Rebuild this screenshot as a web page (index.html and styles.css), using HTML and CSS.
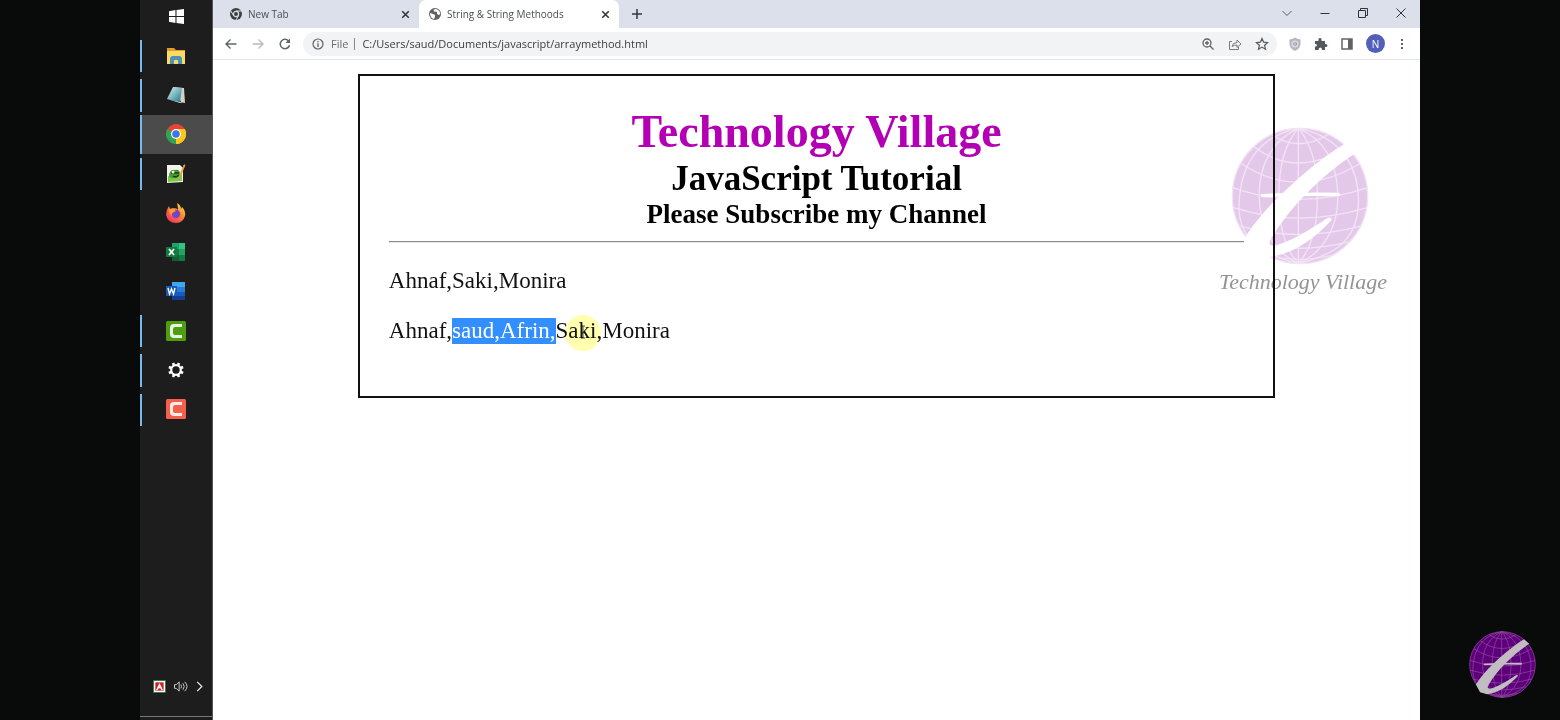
FILE: index.html
```html
<!DOCTYPE html>
<html lang="en">
<head>
<meta charset="utf-8">
<title>String &amp; String Methoods</title>
<link rel="stylesheet" href="styles.css">
</head>
<body>
<svg class="defs" aria-hidden="true">
  <defs>
    <symbol id="globe" viewBox="92 49 412 412">
      <circle class="globe-ball" cx="298" cy="255" r="203"/>
      <g class="globe-grid">
        <circle cx="298" cy="255" r="202"/>
        <path d="M293 53V457M293 53C210 90 175 170 176 255S215 420 293 457M293 53C250 100 235 180 235 255S250 410 293 457M293 53C335 100 350 180 350 255S335 410 293 457M293 53C380 90 410 170 411 255S375 420 293 457M293 53C160 80 118 180 116 285S190 430 293 457M293 53C430 80 478 180 472 285S400 430 293 457"/>
        <path d="M215 73Q293 125 380 73M160 108Q293 205 435 108M122 158Q293 270 477 158M98 230Q293 300 500 230M100 290Q293 352 498 290M120 345Q293 395 478 345M153 392Q293 430 443 392M205 433Q293 455 390 433"/>
      </g>
      <path class="globe-mark" d="M430 100C350 150 290 205 240 252C205 285 165 330 134 378L160 425L203 438C270 431 338 387 393 326Q391 315 380 321C320 362 265 393 222 404C203 405 205 393 213 380C240 335 280 283 320 245C365 200 415 158 462 128Z"/>
      <path class="globe-mark" d="M184 249Q300 243 414 245Q422 251 414 256Q300 253 186 259Q177 254 184 249Z"/>
    </symbol>
    <symbol id="close" viewBox="0 0 12 12"><path d="M3 3l6 6M9 3l-6 6" fill="none" stroke="currentColor" stroke-width="1.4"/></symbol>
    <symbol id="camtasia" viewBox="0 0 20 20"><rect width="20" height="20" rx="1.5" fill="currentColor"/><path d="M16 3H8Q4 3 4 7v6q0 4 4 4h8v-3H9q-2 0-2-2V8q0-2 2-2h7z" fill="#fff" opacity=".88"/></symbol>
  </defs>
</svg>
<div class="screen">
  <nav class="taskbar" aria-label="Taskbar">
    <button class="start" aria-label="Start"><svg class="win" viewBox="0 0 14 14"><path d="M0 2l6-1v5.600H0zM7 1l7-1v6.600H7zM0 7.500h6V13l-6-1zM7 7.500h7V14l-7-1z" fill="#fff"/></svg></button>
    <div class="apps">
      <button class="app open" aria-label="File Explorer"><svg viewBox="0 0 20 20"><path d="M1 2h7l2 2h9v3H1z" fill="#dba02c"/><path d="M1 5h18v13H1z" fill="#ffd964"/><path d="M4 18v-5q0-3 3-3h6q3 0 3 3v5h-4v-4H8v4z" fill="#4a94b8"/></svg></button>
      <button class="app open" aria-label="Notepad"><svg viewBox="0 0 20 20"><defs><linearGradient id="np" x2="1" y2="1"><stop stop-color="#e4f3f3"/><stop offset=".5" stop-color="#78b9c4"/><stop offset="1" stop-color="#277683"/></linearGradient></defs><path d="M7 2l11 1 1 15-4-1z" fill="#d8d2c5"/><path d="M7 2l9 1-2 14-13-3z" fill="url(#np)"/><path d="M1 14l13 3 4 1-4 0z" fill="#c4d8d8"/></svg></button>
      <button class="app open active" aria-label="Google Chrome"><svg viewBox="0 0 20 20"><path d="M10 10L1.500 5A10 10 0 0 1 18.700 5z" fill="#e94336"/><path d="M10 10l8.700-5A10 10 0 0 1 10 20z" fill="#fbc619"/><path d="M10 10v10A10 10 0 0 1 1.300 5z" fill="#33a552"/><path d="M14 12.500L10 20a10 10 0 0 0 8.700-15H10z" fill="#fbc619"/><circle cx="10" cy="10" r="5" fill="#fff"/><circle cx="10" cy="10" r="3.800" fill="#3b78e7"/></svg></button>
      <button class="app open" aria-label="Notepad++"><svg viewBox="0 0 20 20"><path d="M1 1h13l3 3v14L1 19z" fill="#f3f5ec"/><path d="M2 12l14-2v7L2 18z" fill="#79c84b"/><path d="M3 11q1-6 6-5 5-1 5 4-2 5-6 4-4 1-5-3z" fill="#4d9b37"/><path d="M5 9h8M7 12q3 2 6-1" fill="none" stroke="#173d1a" stroke-width="1.500"/><circle cx="7" cy="8" r="1.500" fill="#e7f1d8"/><path d="M19 1l-5 12-1 2 1-4 4-10z" fill="#e5a13a" stroke="#e5a13a"/></svg></button>
      <button class="app" aria-label="Firefox"><svg viewBox="0 0 20 20"><defs><linearGradient id="ff" x1="1" x2=".2" y2="1"><stop stop-color="#fff04d"/><stop offset=".45" stop-color="#ff8c2e"/><stop offset="1" stop-color="#f52d68"/></linearGradient></defs><path d="M11 0q4 2 4 6l1-2q4 4 3 9-2 7-9 7-8 0-10-8 0-5 3-9l1 3 3-1q4 0 5 2 0-3-1-7z" fill="url(#ff)"/><circle cx="10" cy="11" r="4.200" fill="#7842c9"/><path d="M3 6q4-1 7 2l-2 1q-3 1-2 4-3-2-3-7z" fill="#ff9d31"/></svg></button>
      <button class="app" aria-label="Excel"><svg viewBox="0 0 20 20"><path d="M6 1h13v18H6z" fill="#21a366"/><path d="M13 1h6v6h-6z" fill="#33c481"/><path d="M6 7h7v6H6zM6 13h13v6H6z" fill="#107c41"/><path d="M6 13h7v6H6z" fill="#185c37"/><path d="M0 5h11v10H0z" fill="#107c41"/><path d="M3 7l5 6M8 7l-5 6" stroke="#fff" stroke-width="1.700"/></svg></button>
      <button class="app" aria-label="Word"><svg viewBox="0 0 20 20"><path d="M6 1h13v5H6z" fill="#41a5ee"/><path d="M6 6h13v5H6z" fill="#2b7cd3"/><path d="M6 11h13v4H6z" fill="#185abd"/><path d="M6 15h13v4H6z" fill="#103f91"/><path d="M0 5h11v10H0z" fill="#185abd"/><path d="M2 7l1.500 6 2-5 2 5L9 7" fill="none" stroke="#fff" stroke-width="1.400"/></svg></button>
      <button class="app open green" aria-label="Camtasia"><svg><use href="#camtasia"/></svg></button>
      <button class="app open" aria-label="Settings"><svg viewBox="0 0 20 20"><circle cx="10" cy="10" r="4.800" fill="none" stroke="#fff" stroke-width="2.200"/><path d="M14.800 12l2.300 1M12 14.800l1 2.300M8 14.800l-1 2.300M5.200 12l-2.300 1M5.200 8L2.900 7M8 5.200L7 2.900M12 5.200l1-2.300M14.800 8l2.300-1" stroke="#fff" stroke-width="2.600"/></svg></button>
      <button class="app open red" aria-label="Camtasia Recorder"><svg><use href="#camtasia"/></svg></button>
    </div>
    <div class="tray">
      <button aria-label="Avira"><svg viewBox="0 0 14 14"><path fill="#29704c" d="M0 0h14v14H0z"/><path fill="#fff" d="M1 1h12v12H1z"/><path fill="#cf202d" d="M2.500 2.500h9v9h-9z"/><path d="M4 11l3-6 3 6M5 8.500q2-1 4 0" fill="none" stroke="#fff" stroke-width="1.500"/></svg></button>
      <button aria-label="Volume"><svg class="volume" viewBox="0 0 16 14"><path d="M1 5h2l3-3v10L3 9H1zM8 5q1 2 0 4M10 3.500q3 3.500 0 7M12 2q5 5 0 10" fill="none" stroke="#d5d5d5"/></svg></button>
      <button aria-label="More icons"><svg class="more" viewBox="0 0 8 14"><path d="M1 2l5 5-5 5" fill="none" stroke="#eee" stroke-width="1.300"/></svg></button>
    </div>
  </nav>

  <section class="browser">
    <header class="tabstrip">
      <div class="tab">
        <svg viewBox="0 0 14 14"><circle cx="7" cy="7" r="6" fill="#3c4043"/><circle cx="7" cy="7" r="2.600" fill="#3c4043" stroke="#dce0ea" stroke-width="1.200"/><path d="M7 4h5.600M4.500 8.500L1.800 4M9.500 8.500L7 13" stroke="#dce0ea" stroke-width="1"/></svg>
        <span class="tab-title">New Tab</span>
        <button aria-label="Close New Tab"><svg><use href="#close"/></svg></button>
      </div>
      <div class="tab current">
        <svg viewBox="0 0 14 14"><circle cx="7" cy="7" r="6" fill="#5f6368"/><path d="M2 6l3 1 2 1v2l-1 2q-4-1-4-6zM6 2.500q-1 2 1 2l2 .5v2l2 1 1.200-1Q12 3 8 2z" fill="#fff"/></svg>
        <span class="tab-title">String &amp; String Methoods</span>
        <button aria-label="Close String &amp; String Methoods"><svg><use href="#close"/></svg></button>
      </div>
      <button class="new-tab" aria-label="New tab"><svg viewBox="0 0 14 14"><path d="M7 2v10M2 7h10" stroke="#35363a" stroke-width="1.500"/></svg></button>
      <div class="window-controls">
        <button aria-label="Search tabs"><svg viewBox="0 0 14 14"><path d="M2.500 5L7 9.500 11.500 5" fill="none" stroke="#555b66"/></svg></button>
        <button aria-label="Minimize"><svg viewBox="0 0 14 14"><path d="M2.500 7.500h9" stroke="#333" stroke-width="1"/></svg></button>
        <button aria-label="Restore"><svg viewBox="0 0 14 14"><path d="M2.500 4.500h7v7h-7zM4.500 4.500v-2h7v7h-2" fill="none" stroke="#333" stroke-width="1"/></svg></button>
        <button aria-label="Close window"><svg viewBox="0 0 14 14"><path d="M2.500 2.500l9 9M11.500 2.500l-9 9" stroke="#333" stroke-width="1"/></svg></button>
      </div>
    </header>
    <div class="toolbar">
      <div class="nav-buttons">
        <button aria-label="Back"><svg viewBox="0 0 14 14"><path d="M12.500 7H2M6.500 2.500L2 7l4.500 4.500" fill="none" stroke="#5f6368" stroke-width="1.400"/></svg></button>
        <button aria-label="Forward"><svg viewBox="0 0 14 14"><path d="M1.500 7H12M7.500 2.500L12 7l-4.500 4.500" fill="none" stroke="#b9bbbe" stroke-width="1.300"/></svg></button>
        <button aria-label="Reload"><svg viewBox="0 0 14 14"><path d="M10.800 4.300A4.700 4.700 0 1 0 11.500 8.200" fill="none" stroke="#5f6368" stroke-width="1.500"/><path d="M12 1.500v4.500H7.500z" fill="#5f6368"/></svg></button>
      </div>
      <div class="omnibox">
        <svg viewBox="0 0 14 14"><circle cx="7" cy="7" r="5" fill="none" stroke="#5f6368" stroke-width="1.200"/><path d="M7 6.300V10M7 4v1.300" stroke="#5f6368" stroke-width="1.300"/></svg>
        <span class="scheme">File</span>
        <input type="text" aria-label="Address" value="C:/Users/saud/Documents/javascript/arraymethod.html">
        <button aria-label="Zoom"><svg viewBox="0 0 14 14"><circle cx="6" cy="6" r="4" fill="none" stroke="#5f6368" stroke-width="1.300"/><path d="M9 9l3.500 3.500M4 6h4M6 4v4" stroke="#5f6368" stroke-width="1.300"/></svg></button>
        <button aria-label="Share"><svg viewBox="0 0 14 14"><path d="M4 4.500H1.500v8h9V10M4 9.500q.5-4 5-4V3l4 4-4 3.500V8q-3 0-5 1.500z" fill="none" stroke="#777b80" stroke-width="1"/></svg></button>
        <button aria-label="Bookmark"><svg viewBox="0 0 14 14"><path d="M7 1.500l1.600 3.700 4 .4-3 2.700.9 3.900L7 10.100l-3.500 2.100.9-3.900-3-2.700 4-.4z" fill="none" stroke="#55595e" stroke-width="1.200"/></svg></button>
      </div>
      <div class="extensions">
        <button aria-label="Shield extension"><svg viewBox="0 0 14 14"><path d="M7 .5Q9 2 12.500 2.500v5Q12 11.500 7 14 2 11.500 1.500 7.500v-5Q5 2 7 .5z" fill="#b6b8bf"/><circle cx="7" cy="7" r="3.500" fill="#d8dbe4"/><path d="M8.500 6q-3-1-3 1t3 1V6" fill="none" stroke="#9699a9"/></svg></button>
        <button aria-label="Extensions"><svg viewBox="0 0 14 14"><path d="M1 4h3.500q-.5-3 1.500-3t1.500 3H11v3q2.500-.3 2.500 1.500T11 10v3H8q0-2.500-1.700-2.500T4.500 13H1v-3.500q2 0 2-1.300T1 7z" fill="#55595e"/></svg></button>
        <button aria-label="Side panel"><svg viewBox="0 0 14 14"><path d="M2 2h10v10H2z" fill="#fff" stroke="#5f6368" stroke-width="1.500"/><path d="M8 2h4v10H8z" fill="#5f6368"/></svg></button>
        <button class="profile" aria-label="Profile">N</button>
        <button aria-label="Menu"><svg class="dots" viewBox="0 0 10 14"><path d="M4 2h2v2H4zM4 6h2v2H4zM4 10h2v2H4z" fill="#5f6368"/></svg></button>
      </div>
    </div>
    <main class="page">
      <article class="lesson">
        <h1>Technology Village</h1>
        <h2>JavaScript Tutorial</h2>
        <h3>Please Subscribe my Channel</h3>
        <hr>
        <p>Ahnaf,Saki,Monira</p>
        <p>Ahnaf,<mark>saud,Afrin,</mark><span class="pointed">Saki<svg class="pointer" viewBox="0 0 36 36" aria-hidden="true"><circle cx="18" cy="18" r="18" fill="#ffffad"/><path d="M16 11h4M18 11v12M16 23h4" stroke="#444" fill="none"/></svg></span>,Monira</p>
      </article>
      <figure class="watermark">
        <svg><use href="#globe"/></svg>
        <figcaption>Technology Village</figcaption>
      </figure>
    </main>
  </section>

  <aside class="edge"><svg class="badge"><use href="#globe"/></svg></aside>
</div>
</body>
</html>
```
FILE: styles.css
```css
* { box-sizing: border-box; }
body { margin: 0; background: #090b0a; font-family: "Open Sans", "Noto Sans", sans-serif; }
button { display: grid; place-items: center; flex: none; padding: 0; border: 0; background: none; color: inherit; font: inherit; }
svg { display: block; flex: none; width: 14px; height: 14px; }
.defs { position: absolute; width: 0; height: 0; }
.screen { display: grid; grid-template-columns: 140px 73px minmax(0, 1fr) 140px; min-height: 100vh; }

.taskbar { grid-column: 2; display: flex; flex-direction: column; background: #1d1d1d; border-right: 1px solid #555; }
.start { height: 36px; padding-bottom: 3px; }
.win { width: 15px; height: 15px; }
.apps { display: flex; flex-direction: column; height: 393px; }
.app { flex: 1; position: relative; }
.app svg { width: 20px; height: 20px; }
.app.open::before { content: ""; position: absolute; left: 0; top: 4px; bottom: 3px; width: 2px; background: #76b9ed; }
.app.active { background: #4b4b4b; }
.app.active::before { top: 0; bottom: 0; }
.green { color: #4f9d10; }
.red { color: #f4604c; }
.tray { display: flex; align-items: center; justify-content: center; gap: 7px; margin-top: auto; padding: 0 0 23px 4px; border-bottom: 1px solid #777; margin-bottom: 3px; }
.tray svg { width: 13px; height: 13px; }
.tray .volume { width: 16px; }
.tray .more { width: 8px; }

.browser { grid-column: 3; display: flex; flex-direction: column; background: #fff; }
.tabstrip { display: flex; height: 28px; background: #dce0ea; color: #4a4d52; font-size: 10px; }
.tab { display: flex; align-items: center; gap: 5px; width: 200px; padding: 0 7px 0 9px; }
.tab:first-child { width: 206px; padding-left: 16px; }
.tab-title { flex: 1; white-space: nowrap; }
.tab button svg { width: 13px; height: 13px; color: #333; }
.tab.current { background: #fff; border-radius: 7px 7px 0 0; }
.new-tab { width: 36px; }
.window-controls { display: flex; align-items: center; gap: 24px; margin-left: auto; padding: 0 12px 3px 0; }
.toolbar { display: flex; align-items: center; height: 32px; border-bottom: 1px solid #e6e7e9; }
.nav-buttons { display: flex; gap: 13px; padding: 0 11px; }
.omnibox { flex: 1; display: flex; align-items: center; height: 24px; padding: 0 8px; border-radius: 12px; background: #f1f3f4; font-size: 11px; color: #686b70; }
.scheme { padding: 0 6px; border-right: 1px solid #85888c; line-height: 12px; }
.omnibox input { flex: 1; min-width: 0; padding: 0 7px; border: 0; outline: 0; background: none; color: #3c4043; font: inherit; }
.omnibox button { margin-left: 13px; }
.omnibox input + button { margin-left: 0; }
.extensions { display: flex; align-items: center; gap: 12px; padding: 0 13px 0 11px; }
.extensions .dots { width: 10px; }
.profile { width: 19px; height: 19px; border-radius: 50%; background: #5260b8; color: #fff; font-size: 10px; }

.page { flex: 1; position: relative; padding-top: 14px; font-family: "Liberation Serif", "Times New Roman", serif; font-size: 23px; line-height: 26px; }
.lesson { width: 76%; margin: 0 auto; padding: 29px 29px 28px; border: 2px solid #111; color: #111; }
.lesson h1, .lesson h2, .lesson h3 { margin: 0; text-align: center; color: #000; }
.lesson h1 { color: #b400b4; font-size: 46px; line-height: 54px; }
.lesson h2 { font-size: 35px; line-height: 40px; }
.lesson h3 { font-size: 27px; line-height: 30px; }
.lesson hr { margin: 12px 0 25px; border: 0; border-top: 1px solid #8d8d8d; border-bottom: 1px solid #e4e4e4; }
.lesson p { margin: 0 0 24px; }
.lesson mark { display: inline-block; background: #338fff; color: #fff; }
.pointed { position: relative; }
.pointer { position: absolute; left: 9px; top: -3px; width: 36px; height: 36px; mix-blend-mode: multiply; }

.watermark { --ball: #e3c8ea; --grid: #f3e3f6; --mark: #fff; position: absolute; top: 67px; right: 33px; display: flex; flex-direction: column; align-items: center; gap: 4px; margin: 0; color: #949494; font-size: 22px; font-style: italic; }
.watermark svg { width: 138px; height: 138px; margin-right: 6px; }
.watermark { mix-blend-mode: multiply; }
.globe-ball { fill: var(--ball); }
.globe-grid { fill: none; stroke: var(--grid); stroke-width: 4px; }
.globe-mark { fill: var(--mark); }
.edge { grid-column: 4; display: flex; align-items: flex-end; justify-content: flex-end; padding: 0 24px 22px; }
.badge { --ball: #5e007b; --grid: #93509f; --mark: #c1bdc2; width: 67px; height: 67px; }
```
